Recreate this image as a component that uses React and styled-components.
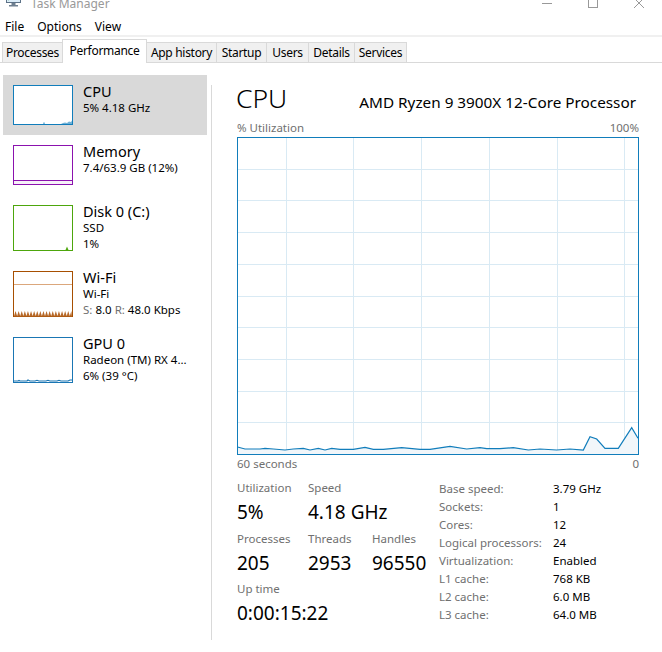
import React from "react";
import styled, { createGlobalStyle } from "styled-components";

const GlobalStyle = createGlobalStyle`
  body {
    margin: 0;
    background: #fff;
  }
`;

const Window = styled.div`
  width: 662px;
  height: 652px;
  overflow: hidden;
  background: #fff;
  display: flex;
  flex-direction: column;
  font-family: "Noto Sans", "Segoe UI", sans-serif;
  color: #000;
`;

/* ------------------------------ TITLE + MENU ------------------------------ */

const TitleBar = styled.div`
  flex-shrink: 0;
  height: 30px;
  margin-top: -12px;
  display: flex;
  align-items: center;
  padding-left: 5px;
`;

const AppIcon = styled.svg`
  margin-top: -8px;
  flex-shrink: 0;
`;

const Caption = styled.span`
  margin-left: 9px;
  font-size: 12px;
  color: #999;
`;

const Controls = styled.div`
  margin-left: auto;
  display: flex;
  height: 100%;
`;

const ControlButton = styled.div`
  width: 46px;
  display: flex;
  align-items: center;
  justify-content: center;
`;

const MenuBar = styled.div`
  flex-shrink: 0;
  height: 17px;
  display: flex;
  align-items: center;
  gap: 13px;
  padding-left: 5px;
  font-size: 12px;
`;

const TabStrip = styled.div`
  flex-shrink: 0;
  height: 25px;
  display: flex;
  align-items: flex-end;
  padding-left: 2px;
  border-top: 2px solid #f0f0f0;
  border-bottom: 1px solid #d9d9d9;
`;

const Tab = styled.div`
  box-sizing: border-box;
  width: ${(p) => p.$w}px;
  height: ${(p) => (p.$active ? 24 : 20)}px;
  margin-bottom: ${(p) => (p.$active ? -1 : 0)}px;
  margin-left: -1px;
  position: relative;
  z-index: ${(p) => (p.$active ? 1 : 0)};
  display: flex;
  align-items: center;
  justify-content: center;
  padding-bottom: ${(p) => (p.$active ? 2 : 0)}px;
  border: 1px solid #d9d9d9;
  border-bottom: none;
  background: ${(p) => (p.$active ? "#fff" : "#f0f0f0")};
  font-size: 12px;
  letter-spacing: -0.3px;
  white-space: nowrap;
  &:first-child {
    margin-left: 0;
  }
`;

/* ------------------------------ SIDEBAR ------------------------------ */

const Body = styled.div`
  flex: 1;
  min-height: 0;
  display: flex;
`;

const Sidebar = styled.div`
  width: 208px;
  padding: 12px 0 0 3px;
  display: flex;
  flex-direction: column;
`;

const Divider = styled.div`
  width: 1px;
  height: 555px;
  margin-top: 22px;
  background: #d9d9d9;
`;

const SideItem = styled.div`
  box-sizing: border-box;
  width: 204px;
  display: flex;
  gap: 10px;
  padding: 10px;
  background: ${(p) => (p.$selected ? "#d9d9d9" : "transparent")};
`;

const ItemText = styled.div`
  display: flex;
  flex-direction: column;
  margin: -3px 0 -1px;
  white-space: nowrap;
`;

const ItemTitle = styled.div`
  font-size: 14.5px;
  line-height: 18px;
`;

const ItemLine = styled.div`
  font-size: 11.5px;
  line-height: 16px;
`;

const Muted = styled.span`
  color: #707070;
`;

/* ------------------------------ MAIN PANEL ------------------------------ */

const Main = styled.div`
  flex: 1;
  padding: 19px 23px 0 25px;
  display: flex;
  flex-direction: column;
`;

const Header = styled.div`
  display: flex;
  justify-content: space-between;
  align-items: baseline;
  height: 32px;
`;

const BigTitle = styled.div`
  font-size: 26.5px;
  line-height: 32px;
  font-weight: 300;
  margin-left: -1px;
`;

const Processor = styled.div`
  font-size: 15.3px;
  padding-right: 3px;
`;

const AxisRow = styled.div`
  display: flex;
  justify-content: space-between;
  font-size: 11.5px;
  line-height: 15px;
  color: #707070;
  margin-top: ${(p) => p.$top}px;
`;

const ChartBox = styled.svg`
  display: block;
  margin-top: 2px;
`;

const Stats = styled.div`
  display: flex;
  margin-top: 9px;
`;

const StatsGrid = styled.div`
  width: 202px;
  display: grid;
  grid-template-columns: 71px 64px auto;
  row-gap: 6.5px;
  align-content: start;
`;

const Stat = styled.div`
  display: flex;
  flex-direction: column;
  grid-column: span ${(p) => p.$span || 1};
  white-space: nowrap;
`;

const StatLabel = styled.div`
  font-size: 11.5px;
  line-height: 16px;
  color: #707070;
  margin-bottom: 4px;
`;

const StatValue = styled.div`
  font-size: 19px;
  line-height: 24px;
`;

const InfoTable = styled.div`
  display: grid;
  grid-template-columns: 114px auto;
  font-size: 11.5px;
  line-height: 18px;
  align-content: start;
  white-space: nowrap;
`;

const InfoLabel = styled.div`
  color: #707070;
`;

/* ------------------------------ DRAWINGS ------------------------------ */

function Thumb({ color, height, children }) {
  return (
    <svg width="60" height={height} style={{ flexShrink: 0 }}>
      <rect x="0.5" y="0.5" width="59" height={height - 1} fill="#fff" stroke={color} />
      {children}
    </svg>
  );
}

function UsageChart() {
  const w = 402;
  const h = 318;
  const vLines = [49, 116, 184, 252, 320, 387];
  const hLines = Array.from({ length: 9 }, (_, i) => Math.round(31.7 * (i + 1)) + 0.5);
  const pts = [
    [0.5, 310], [8, 312], [23, 312], [28, 311.3], [36.3, 312], [48, 313], [56.3, 312],
    [66.3, 311.3], [73, 313], [81.3, 311.3], [88, 313], [94.7, 311.3], [103, 312.3],
    [116.3, 312.3], [128, 310.3], [136.3, 312.3], [146.3, 312.3], [164.7, 310.7],
    [183, 312.3], [193, 312.3], [213, 309.3], [229.7, 312], [243, 310.7], [249.7, 311.7],
    [263, 311.7], [276.3, 310.7], [291.3, 313], [303, 312], [319.7, 313], [333, 312],
    [346.3, 313], [353, 299.7], [359.7, 302], [368, 311.3], [381.3, 311.3],
    [394.7, 290.7], [401, 301.3],
  ];
  const line = pts.map((p) => p.join(",")).join(" ");
  const area = `${line} 401,317 0.5,317`;
  return (
    <ChartBox width={w} height={h}>
      <rect x="0" y="0" width={w} height={h} fill="#fff" />
      {vLines.map((x) => (
        <line key={x} x1={x + 0.5} y1="0" x2={x + 0.5} y2={h} stroke="#d9eaf4" />
      ))}
      {hLines.map((y) => (
        <line key={y} x1="0" y1={y} x2={w} y2={y} stroke="#d9eaf4" />
      ))}
      <polygon points={area} fill="#f1f6fa" />
      <polyline points={line} fill="none" stroke="#117dbb" strokeWidth="1.2" />
      <rect x="0.5" y="0.5" width={w - 1} height={h - 1} fill="none" stroke="#117dbb" />
    </ChartBox>
  );
}

function WifiTeeth() {
  let d = "M1 45";
  for (let x = 1; x < 58; x += 3.1) {
    d += ` L${(x + 1.55).toFixed(2)} 40 L${Math.min(x + 3.1, 59).toFixed(2)} 45`;
  }
  d += " L59 45.5 L1 45.5 Z";
  return <path d={d} fill="#b86a2a" />;
}

const tabs = [
  { label: "Processes", w: 61 },
  { label: "Performance", w: 85, active: true },
  { label: "App history", w: 71 },
  { label: "Startup", w: 51 },
  { label: "Users", w: 43 },
  { label: "Details", w: 47 },
  { label: "Services", w: 53 },
];

const details = [
  ["Base speed:", "3.79 GHz"],
  ["Sockets:", "1"],
  ["Cores:", "12"],
  ["Logical processors:", "24"],
  ["Virtualization:", "Enabled"],
  ["L1 cache:", "768 KB"],
  ["L2 cache:", "6.0 MB"],
  ["L3 cache:", "64.0 MB"],
];

export default function App() {
  return (
    <Window>
      <GlobalStyle />
      <TitleBar>
        <AppIcon width="17" height="16" viewBox="0 0 17 16">
          <rect x="1.5" y="1.5" width="14" height="10" fill="#dcecf8" stroke="#5d7288" />
          <polyline points="3,9 6,6 8,8 11,4 14,6" fill="none" stroke="#2e9b3c" strokeWidth="1.2" />
          <rect x="6.5" y="12" width="4" height="2" fill="#6e7f90" />
          <rect x="4" y="14" width="9" height="1.5" fill="#6e7f90" />
        </AppIcon>
        <Caption>Task Manager</Caption>
        <Controls>
          <ControlButton>
            <svg width="10" height="10">
              <line x1="0" y1="5.5" x2="10" y2="5.5" stroke="#999" />
            </svg>
          </ControlButton>
          <ControlButton>
            <svg width="10" height="10">
              <rect x="0.5" y="0.5" width="9" height="9" fill="none" stroke="#999" />
            </svg>
          </ControlButton>
          <ControlButton>
            <svg width="10" height="10">
              <path d="M0 0 L10 10 M10 0 L0 10" stroke="#999" />
            </svg>
          </ControlButton>
        </Controls>
      </TitleBar>

      <MenuBar>
        <span>File</span>
        <span>Options</span>
        <span>View</span>
      </MenuBar>

      <TabStrip>
        {tabs.map((t) => (
          <Tab key={t.label} $w={t.w} $active={t.active}>
            {t.label}
          </Tab>
        ))}
      </TabStrip>

      <Body>
        <Sidebar>
          <SideItem $selected>
            <Thumb color="#117dbb" height={40}>
              <path d="M48 39 L50 38 L52 37.5 L54 38 L56 36.5 L58 37 L59 35.5 L59 39 Z" fill="#117dbb" opacity="0.6" />
              <rect x="30.5" y="37.5" width="1" height="1.5" fill="#117dbb" />
            </Thumb>
            <ItemText>
              <ItemTitle>CPU</ItemTitle>
              <ItemLine>5% 4.18 GHz</ItemLine>
            </ItemText>
          </SideItem>

          <SideItem>
            <Thumb color="#8b12ae" height={40}>
              <rect x="1" y="35" width="58" height="4" fill="#f6f0f8" />
              <line x1="1" y1="35.5" x2="59" y2="35.5" stroke="#8b12ae" />
            </Thumb>
            <ItemText>
              <ItemTitle>Memory</ItemTitle>
              <ItemLine>7.4/63.9 GB (12%)</ItemLine>
            </ItemText>
          </SideItem>

          <SideItem>
            <Thumb color="#4da60c" height={46}>
              <path d="M52.5 45 L54 41.5 L55.5 45 Z" fill="#4da60c" />
            </Thumb>
            <ItemText>
              <ItemTitle>Disk 0 (C:)</ItemTitle>
              <ItemLine>SSD</ItemLine>
              <ItemLine>1%</ItemLine>
            </ItemText>
          </SideItem>

          <SideItem>
            <Thumb color="#a74f01" height={46}>
              <line x1="1" y1="13.5" x2="59" y2="13.5" stroke="#dba77c" />
              <WifiTeeth />
            </Thumb>
            <ItemText>
              <ItemTitle>Wi-Fi</ItemTitle>
              <ItemLine>Wi-Fi</ItemLine>
              <ItemLine>
                <Muted>S:</Muted> 8.0 <Muted>R:</Muted> 48.0 Kbps
              </ItemLine>
            </ItemText>
          </SideItem>

          <SideItem>
            <Thumb color="#1a76b4" height={46}>
              <polyline
                points="1,44 5,44 6,43.5 7,44 14,44 15,43 17,44 22,44 24,43.3 26,44 33,44 35,43.3 37,44 44,44 46,43.3 48,44 55,44 57,43 59,43"
                fill="none"
                stroke="#1a76b4"
                strokeWidth="1.2"
              />
            </Thumb>
            <ItemText>
              <ItemTitle>GPU 0</ItemTitle>
              <ItemLine>Radeon (TM) RX 4...</ItemLine>
              <ItemLine>6% (39 °C)</ItemLine>
            </ItemText>
          </SideItem>
        </Sidebar>

        <Divider />

        <Main>
          <Header>
            <BigTitle>CPU</BigTitle>
            <Processor>AMD Ryzen 9 3900X 12-Core Processor</Processor>
          </Header>
          <AxisRow $top={6}>
            <span>% Utilization</span>
            <span>100%</span>
          </AxisRow>
          <UsageChart />
          <AxisRow $top={1}>
            <span>60 seconds</span>
            <span>0</span>
          </AxisRow>

          <Stats>
            <StatsGrid>
              <Stat>
                <StatLabel>Utilization</StatLabel>
                <StatValue>5%</StatValue>
              </Stat>
              <Stat $span={2}>
                <StatLabel>Speed</StatLabel>
                <StatValue>4.18 GHz</StatValue>
              </Stat>
              <Stat>
                <StatLabel>Processes</StatLabel>
                <StatValue>205</StatValue>
              </Stat>
              <Stat>
                <StatLabel>Threads</StatLabel>
                <StatValue>2953</StatValue>
              </Stat>
              <Stat>
                <StatLabel>Handles</StatLabel>
                <StatValue>96550</StatValue>
              </Stat>
              <Stat $span={3}>
                <StatLabel>Up time</StatLabel>
                <StatValue>0:00:15:22</StatValue>
              </Stat>
            </StatsGrid>

            <InfoTable>
              {details.map(([k, v]) => (
                <React.Fragment key={k}>
                  <InfoLabel>{k}</InfoLabel>
                  <div>{v}</div>
                </React.Fragment>
              ))}
            </InfoTable>
          </Stats>
        </Main>
      </Body>
    </Window>
  );
}
